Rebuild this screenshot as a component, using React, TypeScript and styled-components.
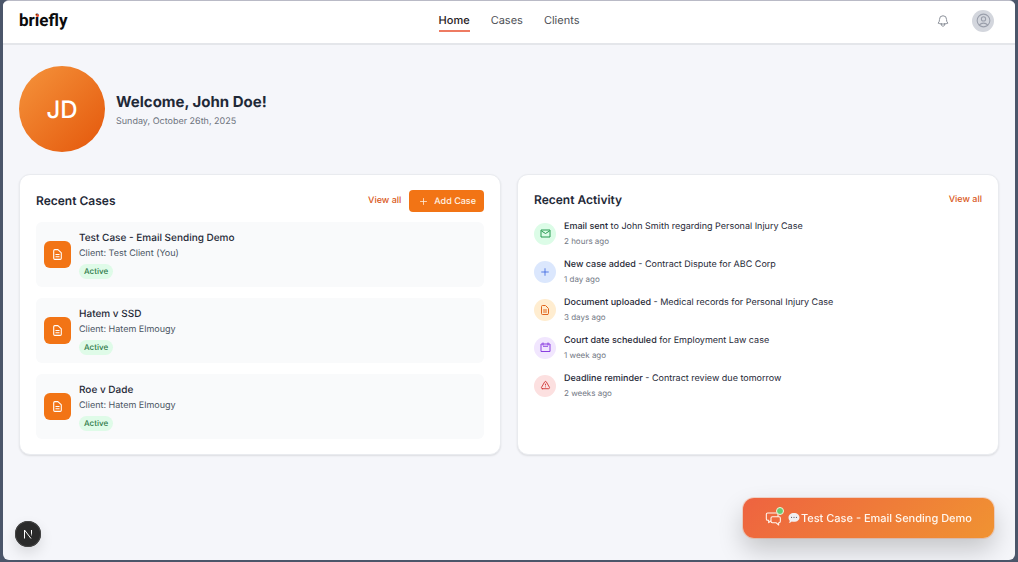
import React from "react";
import styled, { createGlobalStyle, css } from "styled-components";
import { HiOutlineBell, HiOutlineUserCircle } from "react-icons/hi2";
import { HiOutlineDocumentText, HiOutlineExclamation, HiOutlinePlus } from "react-icons/hi";

const Global = createGlobalStyle`
  *, *::before, *::after { box-sizing: border-box; }
  body {
    margin: 0;
    background: #4b566a;
    font-family: Inter, "Liberation Sans", sans-serif;
    text-rendering: geometricPrecision;
    color: #1f2937;
  }
  h1, h2, h3, p, ul { margin: 0; padding: 0; }
  ul { list-style: none; }
  a { color: inherit; text-decoration: none; }
  button { font: inherit; border: 0; padding: 0; background: none; cursor: pointer; text-rendering: inherit; }
`;

const Frame = styled.div`
  min-height: 100vh;
  padding: 0 3px 2px;
  display: flex;
`;

const Window = styled.div`
  flex: 1;
  min-width: 0;
  background: #f5f6fa;
  border-top: 1px solid #b9bac6;
  border-radius: 6px;
  overflow: hidden;
`;

const Header = styled.header`
  display: grid;
  grid-template-columns: 1fr auto 1fr;
  align-items: center;
  height: 44px;
  padding: 0 16px 3px;
  background: #fff;
  border-bottom: 2px solid #e4e6ea;
`;

const Logo = styled.a`
  justify-self: start;
  font-family: Roboto, Inter, sans-serif;
  font-size: 17px;
  line-height: 20px;
  font-weight: 700;
  color: #0b0b0c;
`;

const LogoI = styled.span`
  position: relative;

  &::after {
    content: "";
    position: absolute;
    left: 1px;
    top: 3px;
    width: 3px;
    height: 3px;
    border-radius: 50%;
    background: #e8502f;
  }
`;

const Nav = styled.nav`
  display: flex;
  gap: 21px;
`;

const NavLink = styled.a<{ $active?: boolean }>`
  padding: 4px 0 3px;
  font-size: 11px;
  line-height: 14px;
  font-weight: ${(p) => (p.$active ? 500 : 400)};
  color: ${(p) => (p.$active ? "#1f2024" : "#4d4f55")};
  border-bottom: 2px solid ${(p) => (p.$active ? "#ee7b62" : "transparent")};
`;

const HeaderActions = styled.div`
  justify-self: end;
  display: flex;
  align-items: center;
  gap: 22px;
  padding-right: 5px;
`;

const BellButton = styled.button`
  display: flex;
  color: #7d828d;
`;

const ProfileButton = styled.button`
  display: flex;
  align-items: center;
  justify-content: center;
  width: 22px;
  height: 22px;
  border-radius: 50%;
  background: #d3d6dd;
  color: #9a9fab;
`;

const Main = styled.main`
  padding: 21px 16px;
  display: flex;
  flex-direction: column;
  gap: 22px;
`;

const Welcome = styled.section`
  display: flex;
  align-items: center;
  gap: 11px;
`;

const Avatar = styled.div`
  display: flex;
  align-items: center;
  justify-content: center;
  width: 86px;
  height: 86px;
  border-radius: 50%;
  background: linear-gradient(135deg, #f5943c, #e4570b);
  color: #fff;
  font-size: 24px;
  font-weight: 500;
`;

const Greeting = styled.div`
  padding-top: 3px;
`;

const WelcomeTitle = styled.h1`
  font-size: 15px;
  line-height: 22px;
  font-weight: 700;
`;

const WelcomeDate = styled.p`
  font-size: 9px;
  line-height: 18px;
  color: #6f747e;
`;

const Cards = styled.div`
  display: grid;
  grid-template-columns: repeat(auto-fit, minmax(400px, 1fr));
  gap: 16px;
`;

const Card = styled.section`
  padding: 15px 16px;
  background: #fff;
  border: 1px solid #e9ebef;
  border-radius: 11px;
  box-shadow: 0 1px 2px rgba(0, 0, 0, 0.1);
`;

const CardHeader = styled.div<{ $gap: number }>`
  display: flex;
  align-items: center;
  justify-content: space-between;
  margin-bottom: ${(p) => p.$gap}px;
`;

const CardTitle = styled.h2`
  font-size: 12px;
  line-height: 20px;
  font-weight: 600;
`;

const CardActions = styled.div`
  display: flex;
  align-items: center;
  gap: 8px;
`;

const ViewAll = styled.a`
  font-size: 9px;
  line-height: 14px;
  font-weight: 500;
  color: #d9581a;
`;

const AddButton = styled.button`
  display: flex;
  align-items: center;
  gap: 6px;
  height: 22px;
  padding: 0 8px 0 10px;
  border-radius: 4px;
  background: #f27415;
  color: #fff3e6;
  font-size: 9px;
  font-weight: 500;
`;

const CaseList = styled.ul`
  display: flex;
  flex-direction: column;
  gap: 11px;
`;

const CaseRow = styled.li`
  display: flex;
  align-items: center;
  gap: 8px;
  padding: 8px;
  border-radius: 6px;
  background: #f9fafb;
`;

const CaseIcon = styled.div`
  display: flex;
  align-items: center;
  justify-content: center;
  width: 27px;
  height: 27px;
  border-radius: 6px;
  background: #f27415;
  color: #fff;
`;

const CaseInfo = styled.div`
  display: flex;
  flex-direction: column;
  align-items: flex-start;
`;

const CaseTitle = styled.h3`
  font-size: 10px;
  line-height: 17px;
  font-weight: 500;
`;

const CaseClient = styled.p`
  font-size: 9px;
  line-height: 14px;
  color: #4b5563;
`;

const Status = styled.span`
  margin-top: 3px;
  padding: 0 5px;
  border-radius: 8px;
  background: #dffbe8;
  color: #2f7a4a;
  font-size: 8px;
  line-height: 15px;
  font-weight: 500;
`;

const ActivityList = styled.ul`
  display: flex;
  flex-direction: column;
  gap: 9px;
`;

const ActivityRow = styled.li`
  display: flex;
  align-items: center;
  gap: 8px;
`;

const tones = {
  green: css`background: #dcfce7; color: #279a50;`,
  blue: css`background: #dbe7fd; color: #3b66e0;`,
  orange: css`background: #ffedd0; color: #e0651c;`,
  purple: css`background: #f1e6fe; color: #8a3fe0;`,
  red: css`background: #fce0e0; color: #cf3434;`,
};

const ActivityIcon = styled.div<{ $tone: keyof typeof tones }>`
  display: flex;
  align-items: center;
  justify-content: center;
  width: 22px;
  height: 22px;
  border-radius: 50%;
  ${(p) => tones[p.$tone]}
`;

const ActivityText = styled.p`
  font-size: 9px;
  line-height: 15px;
`;

const Strong = styled.strong`
  font-weight: 500;
`;

const ActivityTime = styled.p`
  font-size: 8px;
  line-height: 14px;
  color: #737985;
`;

const ChatButton = styled.button`
  position: fixed;
  right: 24px;
  bottom: 24px;
  display: flex;
  align-items: center;
  height: 40px;
  padding: 0 22px;
  border-radius: 11px;
  background: linear-gradient(135deg, #ee6340, #f09332);
  box-shadow: 0 0 0 1px rgba(240, 120, 60, 0.25), 0 12px 26px rgba(0, 0, 0, 0.2);
  color: #fff6ee;
  font-size: 11px;
  font-weight: 500;
`;

const ChatIcon = styled.span`
  position: relative;
  display: flex;
  margin-right: 7px;

  &::after {
    content: "";
    position: absolute;
    top: -4px;
    right: -3px;
    width: 8px;
    height: 8px;
    border: 1px solid #f6f3dc;
    border-radius: 50%;
    background: #68cb74;
  }
`;

const Balloon = styled.svg`
  margin-right: 1px;
`;

const DevBadge = styled.button`
  position: fixed;
  left: 15px;
  bottom: 15px;
  display: flex;
  align-items: center;
  justify-content: center;
  width: 26px;
  height: 26px;
  border-radius: 50%;
  background: #2b2b2b;
  box-shadow: inset 0 0 0 1px #454545, 0 6px 14px rgba(0, 0, 0, 0.12);
`;

const MailIcon = () => (
  <svg width="11" height="11" viewBox="0 0 22 22" fill="none" stroke="currentColor" strokeWidth="2" strokeLinejoin="round">
    <path d="M2 4h18v14H2zM3 6l8 5 8-5" />
  </svg>
);

const CalendarIcon = () => (
  <svg width="11" height="11" viewBox="0 0 22 22" fill="none" stroke="currentColor" strokeWidth="2" strokeLinejoin="round">
    <path d="M2 4h18v15H2zM6 1v6M16 1v6M6 8.500h10" />
  </svg>
);

const ChatBubbles = () => (
  <svg width="16" height="15" viewBox="0 0 48 45" fill="none" stroke="currentColor" strokeWidth="3.200" strokeLinecap="round" strokeLinejoin="round">
    <path d="M17 30l-6 5v-7H8a4 4 0 01-4-4V10a4 4 0 014-4h27a4 4 0 014 4v6" />
    <path d="M22 17h20a4 4 0 014 4v10a4 4 0 01-4 4h-1v7l-8-7H22a4 4 0 01-4-4V21a4 4 0 014-4z" />
  </svg>
);

const cases = [
  { title: "Test Case - Email Sending Demo", client: "Test Client (You)" },
  { title: "Hatem v SSD", client: "Hatem Elmougy" },
  { title: "Roe v Dade", client: "Hatem Elmougy" },
];

const activity: { tone: keyof typeof tones; icon: React.ReactNode; lead: string; rest: string; time: string }[] = [
  { tone: "green", icon: <MailIcon />, lead: "Email sent", rest: " to John Smith regarding Personal Injury Case", time: "2 hours ago" },
  { tone: "blue", icon: <HiOutlinePlus size={10} />, lead: "New case added", rest: " - Contract Dispute for ABC Corp", time: "1 day ago" },
  { tone: "orange", icon: <HiOutlineDocumentText size={12} />, lead: "Document uploaded", rest: " - Medical records for Personal Injury Case", time: "3 days ago" },
  { tone: "purple", icon: <CalendarIcon />, lead: "Court date scheduled", rest: " for Employment Law case", time: "1 week ago" },
  { tone: "red", icon: <HiOutlineExclamation size={11} />, lead: "Deadline reminder", rest: " - Contract review due tomorrow", time: "2 weeks ago" },
];

export default function App() {
  return (
    <Frame>
      <Global />
      <Window>
        <Header>
          <Logo href="#">
            br<LogoI>i</LogoI>efly
          </Logo>
          <Nav>
            <NavLink href="#" $active>Home</NavLink>
            <NavLink href="#">Cases</NavLink>
            <NavLink href="#">Clients</NavLink>
          </Nav>
          <HeaderActions>
            <BellButton aria-label="Notifications"><HiOutlineBell size={14} /></BellButton>
            <ProfileButton aria-label="Profile"><HiOutlineUserCircle size={17} /></ProfileButton>
          </HeaderActions>
        </Header>

        <Main>
          <Welcome>
            <Avatar>JD</Avatar>
            <Greeting>
              <WelcomeTitle>Welcome, John Doe!</WelcomeTitle>
              <WelcomeDate>Sunday, October 26th, 2025</WelcomeDate>
            </Greeting>
          </Welcome>

          <Cards>
            <Card>
              <CardHeader $gap={10}>
                <CardTitle>Recent Cases</CardTitle>
                <CardActions>
                  <ViewAll href="#">View all</ViewAll>
                  <AddButton><HiOutlinePlus size={9} />Add Case</AddButton>
                </CardActions>
              </CardHeader>
              <CaseList>
                {cases.map((c) => (
                  <CaseRow key={c.title}>
                    <CaseIcon><HiOutlineDocumentText size={13} /></CaseIcon>
                    <CaseInfo>
                      <CaseTitle>{c.title}</CaseTitle>
                      <CaseClient>Client: {c.client}</CaseClient>
                      <Status>Active</Status>
                    </CaseInfo>
                  </CaseRow>
                ))}
              </CaseList>
            </Card>

            <Card>
              <CardHeader $gap={9}>
                <CardTitle>Recent Activity</CardTitle>
                <ViewAll href="#">View all</ViewAll>
              </CardHeader>
              <ActivityList>
                {activity.map((a) => (
                  <ActivityRow key={a.lead}>
                    <ActivityIcon $tone={a.tone}>{a.icon}</ActivityIcon>
                    <div>
                      <ActivityText><Strong>{a.lead}</Strong>{a.rest}</ActivityText>
                      <ActivityTime>{a.time}</ActivityTime>
                    </div>
                  </ActivityRow>
                ))}
              </ActivityList>
            </Card>
          </Cards>
        </Main>
      </Window>

      <DevBadge aria-label="Developer tools">
        <svg width="10" height="10" viewBox="0 0 20 20" fill="none" strokeWidth="2">
          <defs>
            <linearGradient id="fade" x1="0" y1="0" x2="0" y2="1">
              <stop offset="0.5" stopColor="#fff" />
              <stop offset="1" stopColor="#fff" stopOpacity="0.2" />
            </linearGradient>
          </defs>
          <path d="M3 19V2l13 17" stroke="#fff" />
          <path d="M16 2h2v12h-2z" fill="url(#fade)" />
        </svg>
      </DevBadge>

      <ChatButton>
        <ChatIcon><ChatBubbles /></ChatIcon>
        <Balloon width="12" height="12" viewBox="0 0 22 22">
          <path d="M11 2c6 0 10 3.500 10 8s-4 8-10 8c-1.500 0-3-.2-4.200-.7C5.500 19 3.500 20 1.500 20c1-1 1.700-2.300 1.700-4C1.700 14.500 1 12.400 1 10c0-4.500 4-8 10-8z" fill="#f1eff2" />
          <circle cx="6.500" cy="10" r="1.100" fill="#6b6670" />
          <circle cx="11" cy="10" r="1.100" fill="#6b6670" />
          <circle cx="15.500" cy="10" r="1.100" fill="#6b6670" />
        </Balloon>
        Test Case - Email Sending Demo
      </ChatButton>
    </Frame>
  );
}
